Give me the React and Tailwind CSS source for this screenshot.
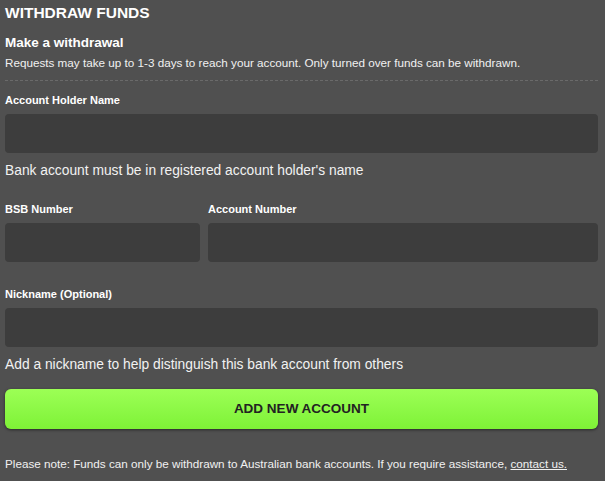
import React from "react";

function Field({ label, className = "" }) {
  return (
    <div className={className}>
      <label className="block text-[11px] font-bold text-white leading-[14px]">
        {label}
      </label>
      <div className="mt-[7px] h-[39px] rounded-[4px] bg-[#3d3d3d]" />
    </div>
  );
}

export default function App() {
  return (
    <div
      className="w-[605px] h-[481px] bg-[#505050] text-white px-[5px] pt-[4px] overflow-hidden"
      style={{ fontFamily: "'Liberation Sans', Arial, sans-serif" }}
    >
      <div className="w-[593px]">
        <h1 className="text-[15.5px] font-bold leading-[18px]">WITHDRAW FUNDS</h1>
        <h2 className="mt-[13px] text-[13.5px] font-bold leading-[16px]">Make a withdrawal</h2>
        <p className="mt-[5px] text-[11.7px] leading-[14px] text-[#f0f0f0]">
          Requests may take up to 1-3 days to reach your account. Only turned over funds can be withdrawn.
        </p>
        <div className="mt-[10px] border-t border-dashed border-[#6a6a6a]" />

        <Field label="Account Holder Name" className="mt-[12px]" />
        <p className="mt-[9px] text-[13.8px] leading-[17px] text-[#f2f2f2]">
          Bank account must be in registered account holder's name
        </p>

        <div className="mt-[23px] flex gap-[8px]">
          <Field label="BSB Number" className="w-[195px]" />
          <Field label="Account Number" className="flex-1" />
        </div>

        <Field label="Nickname (Optional)" className="mt-[25px]" />
        <p className="mt-[9px] text-[13.8px] leading-[17px] text-[#f2f2f2]">
          Add a nickname to help distinguish this bank account from others
        </p>

        <button className="mt-[16px] w-full h-[40px] rounded-[6px] bg-gradient-to-b from-[#9cff55] to-[#7ef236] shadow-[0_1px_3px_rgba(0,0,0,0.5)] text-[#222] text-[13.5px] font-bold">
          ADD NEW ACCOUNT
        </button>

        <p className="mt-[28px] text-[11.7px] leading-[14px] text-[#f0f0f0]">
          Please note: Funds can only be withdrawn to Australian bank accounts. If you require assistance,{" "}
          <a href="#" className="underline">contact us.</a>
        </p>
      </div>
    </div>
  );
}
